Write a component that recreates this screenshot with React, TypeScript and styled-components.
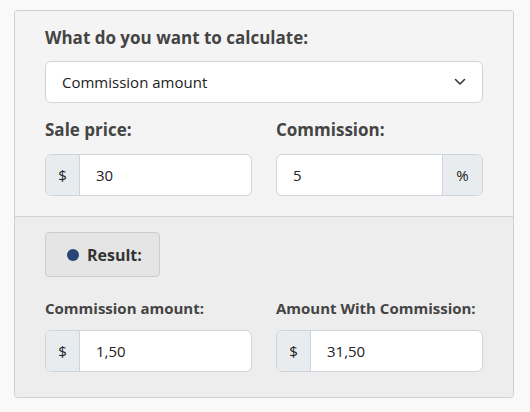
import React from "react";
import styled, { createGlobalStyle } from "styled-components";

const Global = createGlobalStyle`
  html, body { margin: 0; padding: 0; background: #f9f9f9; }
  body { font-family: "Open Sans", "Noto Sans", sans-serif; color: #444; }
  * { box-sizing: border-box; }
`;

const Page = styled.div`
  padding: 10px 0 0 14px;
`;

const Card = styled.div`
  width: 500px;
  border: 1px solid #cfcfcf;
  border-radius: 4px;
  overflow: hidden;
  background: #f4f4f4;
`;

const Section = styled.div<{ $tone: "top" | "bottom" }>`
  padding: ${(p) => (p.$tone === "top" ? "15px 30px 20px" : "15px 30px 25px")};
  background: ${(p) => (p.$tone === "top" ? "#f4f4f4" : "#ededed")};
  border-top: ${(p) => (p.$tone === "bottom" ? "1px solid #d2d2d2" : "none")};
  display: flex;
  flex-direction: column;
`;

const Title = styled.div`
  font-size: 17px;
  font-weight: 700;
  line-height: 24px;
  margin-bottom: 11px;
`;

const SelectBox = styled.div`
  height: 42px;
  background: #fff;
  border: 1px solid #ced4da;
  border-radius: 6px;
  display: flex;
  align-items: center;
  justify-content: space-between;
  padding: 0 16px;
  font-size: 15px;
  color: #222;
`;

const Row = styled.div<{ $top: number }>`
  display: grid;
  grid-template-columns: 1fr 1fr;
  column-gap: 24px;
  margin-top: ${(p) => p.$top}px;
`;

const Field = styled.div`
  display: flex;
  flex-direction: column;
`;

const Label = styled.div<{ $small?: boolean }>`
  font-size: ${(p) => (p.$small ? "15px" : "17px")};
  font-weight: 700;
  line-height: 24px;
  margin-bottom: ${(p) => (p.$small ? "10px" : "12px")};
`;

const Group = styled.div`
  display: flex;
  height: 42px;
  border: 1px solid #ced4da;
  border-radius: 6px;
  overflow: hidden;
  background: #fff;
`;

const Addon = styled.div<{ $w: number; $side: "left" | "right" }>`
  width: ${(p) => p.$w}px;
  flex: none;
  background: #e9ecef;
  display: flex;
  align-items: center;
  justify-content: center;
  font-size: 15px;
  color: #222;
  ${(p) => (p.$side === "left" ? "border-right: 1px solid #ced4da;" : "border-left: 1px solid #ced4da;")}
`;

const Value = styled.div`
  flex: 1;
  display: flex;
  align-items: center;
  padding-left: 16px;
  font-size: 15px;
  color: #222;
`;

const ResultButton = styled.div`
  align-self: flex-start;
  width: 115px;
  height: 45px;
  background: #e5e5e5;
  border: 1px solid #cdcdcd;
  border-radius: 4px;
  display: flex;
  align-items: center;
  padding-left: 21px;
  gap: 8px;
  font-size: 16px;
  font-weight: 700;
  color: #333;
`;

const Dot = styled.span`
  width: 12px;
  height: 12px;
  border-radius: 50%;
  background: #284777;
`;

const Chevron = () => (
  <svg width="12" height="8" viewBox="0 0 12 8" fill="none">
    <path d="M1.5 1.5 L6 6 L10.5 1.5" stroke="#343a40" strokeWidth="1.6" strokeLinecap="round" strokeLinejoin="round" />
  </svg>
);

export default function App() {
  return (
    <Page>
      <Global />
      <Card>
        <Section $tone="top">
          <Title>What do you want to calculate:</Title>
          <SelectBox>
            <span>Commission amount</span>
            <Chevron />
          </SelectBox>
          <Row $top={15}>
            <Field>
              <Label>Sale price:</Label>
              <Group>
                <Addon $w={34} $side="left">$</Addon>
                <Value>30</Value>
              </Group>
            </Field>
            <Field>
              <Label>Commission:</Label>
              <Group>
                <Value>5</Value>
                <Addon $w={40} $side="right">%</Addon>
              </Group>
            </Field>
          </Row>
        </Section>
        <Section $tone="bottom">
          <ResultButton>
            <Dot />
            <span>Result:</span>
          </ResultButton>
          <Row $top={19}>
            <Field>
              <Label $small>Commission amount:</Label>
              <Group>
                <Addon $w={34} $side="left">$</Addon>
                <Value>1,50</Value>
              </Group>
            </Field>
            <Field>
              <Label $small>Amount With Commission:</Label>
              <Group>
                <Addon $w={34} $side="left">$</Addon>
                <Value>31,50</Value>
              </Group>
            </Field>
          </Row>
        </Section>
      </Card>
    </Page>
  );
}
